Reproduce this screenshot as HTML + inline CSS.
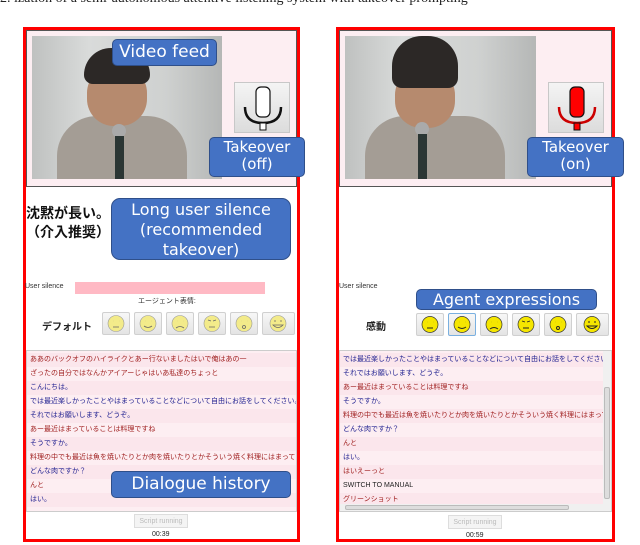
<!DOCTYPE html>
<html><head><meta charset="utf-8"><style>
*{margin:0;padding:0;box-sizing:border-box}
body{width:640px;height:545px;background:#fff;position:relative;overflow:hidden;font-family:"Liberation Sans","Noto Sans CJK JP",sans-serif}
.a{position:absolute}
.red{border:3px solid #f00}
.top{background:#fdeef2;border:1px solid #555}
.vid{background:linear-gradient(90deg,#bfc1c0 0%,#d9dbda 30%,#cfd1d0 70%,#b5b7b6 100%);overflow:hidden}
.lbl{background:#4472c4;border:1px solid #2f4f8a;border-radius:5px;color:#fff;text-align:center;font-family:"DejaVu Sans",sans-serif;line-height:1.15}
.mic{background:linear-gradient(#f4f4f4,#dcdcdc);border:1px solid #c8c8c8}
.face{background:linear-gradient(#f7f7f7,#e4e4e4);border:1px solid #d0d0d0;border-radius:2px}
.dlg{border:1px solid #ccc;background:#fdeef2;font-size:7px;overflow:hidden}
.dlg div{height:14px;line-height:14px;padding-left:3px;white-space:nowrap}
.dlg div:nth-child(odd){background:#fbe6ec}
.r{color:#a02020}.b{color:#202090}
.btn{border:1px solid #ddd;background:#f4f4f4;color:#bbb;font-size:7px;text-align:center;line-height:13px}
</style></head><body>
<div class="a" style="left:0;top:-9px;font-family:'Liberation Serif',serif;font-size:14px;color:#222;white-space:nowrap">2. ization of a semi-autonomous attentive listening system with takeover prompting</div>

<!-- LEFT -->
<div class="a red" style="left:23px;top:27px;width:277px;height:515px"></div>
<div class="a top" style="left:26px;top:30px;width:271px;height:157px"></div>
<div class="a vid" style="left:32px;top:36px;width:190px;height:143px">
 <div class="a" style="left:25px;top:80px;width:130px;height:80px;background:#a49d95;border-radius:40px 40px 0 0"></div>
 <div class="a" style="left:55px;top:30px;width:60px;height:60px;background:#b68a6e;border-radius:45%"></div>
 <div class="a" style="left:52px;top:12px;width:66px;height:36px;background:#2c2826;border-radius:30px 30px 10px 10px"></div>
 <div class="a" style="left:80px;top:88px;width:14px;height:14px;background:#aaa;border-radius:50%"></div>
 <div class="a" style="left:83px;top:100px;width:9px;height:45px;background:#2b3634"></div>
</div>
<div class="a lbl" style="left:112px;top:39px;width:105px;height:27px;font-size:17px;line-height:25px">Video feed</div>
<div class="a mic" style="left:234px;top:82px;width:56px;height:51px">
<svg width="56" height="51" viewBox="0 0 56 51"><rect x="21" y="4" width="14" height="30" rx="5" fill="#fff" stroke="#111" stroke-width="1.2"/><path d="M10 24 Q10 40 28 40 Q46 40 46 24" fill="none" stroke="#111" stroke-width="2.5"/><rect x="25" y="40" width="6" height="7" fill="#fff" stroke="#111"/></svg></div>
<div class="a lbl" style="left:209px;top:137px;width:96px;height:40px;font-size:15px;padding-top:1px">Takeover<br>(off)</div>
<div class="a" style="left:26px;top:204px;font-size:14px;font-weight:bold;line-height:19px;color:#111">沈黙が長い。<br>（介入推奨）</div>
<div class="a lbl" style="left:111px;top:198px;width:180px;height:62px;font-size:16px;line-height:20px;padding-top:1px;border-radius:9px">Long user silence<br>(recommended<br>takeover)</div>
<div class="a" style="left:25px;top:283px;font-size:7px;color:#333">User silence</div>
<div class="a" style="left:75px;top:282px;width:190px;height:12px;background:#ffb9c4"></div>
<div class="a" style="left:138px;top:296px;font-size:7px;color:#333">エージェント表情:</div>
<div class="a" style="left:42px;top:318px;font-size:10px;font-weight:bold;color:#222">デフォルト</div>

<!-- RIGHT -->
<div class="a red" style="left:336px;top:27px;width:279px;height:515px"></div>
<div class="a top" style="left:339px;top:30px;width:273px;height:157px"></div>
<div class="a vid" style="left:345px;top:36px;width:191px;height:143px">
 <div class="a" style="left:20px;top:80px;width:140px;height:80px;background:#a49d95;border-radius:40px 40px 0 0"></div>
 <div class="a" style="left:50px;top:32px;width:60px;height:60px;background:#b68a6e;border-radius:45%"></div>
 <div class="a" style="left:47px;top:0px;width:66px;height:52px;background:#2c2826;border-radius:30px 30px 10px 10px"></div>
 <div class="a" style="left:70px;top:86px;width:14px;height:14px;background:#aaa;border-radius:50%"></div>
 <div class="a" style="left:73px;top:98px;width:9px;height:45px;background:#2b3634"></div>
</div>
<div class="a mic" style="left:548px;top:82px;width:56px;height:51px">
<svg width="56" height="51" viewBox="0 0 56 51"><rect x="21" y="4" width="14" height="30" rx="5" fill="#f00" stroke="#111" stroke-width="1.2"/><path d="M10 24 Q10 40 28 40 Q46 40 46 24" fill="none" stroke="#c00" stroke-width="2.5"/><rect x="25" y="40" width="6" height="7" fill="#f00" stroke="#111"/></svg></div>
<div class="a lbl" style="left:527px;top:137px;width:97px;height:40px;font-size:15px;padding-top:1px">Takeover<br>(on)</div>
<div class="a" style="left:339px;top:283px;font-size:7px;color:#333">User silence</div>
<div class="a lbl" style="left:416px;top:289px;width:181px;height:21px;font-size:16px;line-height:19px">Agent expressions</div>
<div class="a" style="left:366px;top:318px;font-size:10px;font-weight:bold;color:#222">感動</div>

<div class="a face" style="left:102px;top:312px;width:28px;height:23px"></div>
<div class="a face" style="left:134px;top:312px;width:28px;height:23px"></div>
<div class="a face" style="left:166px;top:312px;width:28px;height:23px"></div>
<div class="a face" style="left:198px;top:312px;width:28px;height:23px"></div>
<div class="a face" style="left:230px;top:312px;width:28px;height:23px"></div>
<div class="a face" style="left:262px;top:312px;width:33px;height:23px"></div>
<div class="a face" style="left:416px;top:313px;width:28px;height:23px"></div>
<div class="a face" style="left:448px;top:313px;width:28px;height:23px;border-color:#7ab0e0"></div>
<div class="a face" style="left:480px;top:313px;width:28px;height:23px"></div>
<div class="a face" style="left:512px;top:313px;width:28px;height:23px"></div>
<div class="a face" style="left:544px;top:313px;width:28px;height:23px"></div>
<div class="a face" style="left:576px;top:313px;width:33px;height:23px"></div>
<svg class="a" style="left:0;top:0" width="640" height="545">
<g fill="#f3eb8a" stroke="#999" stroke-width=".6">
<circle cx="116" cy="323.5" r="8"/><circle cx="148" cy="323.5" r="8"/><circle cx="180" cy="323.5" r="8"/><circle cx="212" cy="323.5" r="8"/><circle cx="244" cy="323.5" r="8"/><circle cx="278" cy="323.5" r="8"/>
</g>
<g fill="#f5e600" stroke="#333" stroke-width=".7">
<circle cx="430" cy="324.5" r="8"/><circle cx="462" cy="324.5" r="8"/><circle cx="494" cy="324.5" r="8"/><circle cx="526" cy="324.5" r="8"/><circle cx="558" cy="324.5" r="8"/><circle cx="592" cy="324.5" r="8"/>
</g>
<g fill="none" stroke="#666" stroke-width=".8">
<path d="M113 321h.1M119 321h.1M113 327h6"/><path d="M145 321h.1M151 321h.1M144 326q4 3 8 0"/><path d="M177 321h.1M183 321h.1M176 328q4-3 8 0"/><path d="M208 320l3 1M216 320l-3 1M209 327h6"/><path d="M241 321h.1M247 321h.1"/><circle cx="244" cy="327" r="1.5"/><path d="M274 321h2M280 321h2M273 325q5 5 10 0z"/>
</g>
<g fill="none" stroke="#222" stroke-width=".9">
<path d="M427 322h.1M433 322h.1M427 328h6"/><path d="M459 322h.1M465 322h.1M458 327q4 3 8 0"/><path d="M491 322h.1M497 322h.1M490 329q4-3 8 0"/><path d="M522 321l3 1M530 321l-3 1M523 328h6"/><path d="M555 322h.1M561 322h.1"/><circle cx="558" cy="328" r="1.5"/><path d="M588 322h2M594 322h2M587 326q5 5 10 0z"/>
</g>
</svg>

<div class="a dlg" style="left:26px;top:350px;width:271px;height:162px;padding-top:2px">
<div class="r">ああのバックオフのハイライクとあー行ないましたはいで俺はあの一</div>
<div class="r">ざったの自分ではなんかアイアーじゃはいあ私達のちょっと</div>
<div class="b">こんにちは。</div>
<div class="b">では最近楽しかったことやはまっていることなどについて自由にお話をしてください。</div>
<div class="b">それではお願いします、どうぞ。</div>
<div class="r">あー最近はまっていることは料理ですね</div>
<div class="b">そうですか。</div>
<div class="r">料理の中でも最近は魚を焼いたりとか肉を焼いたりとかそういう焼く料理にはまっています</div>
<div class="b">どんな肉ですか？</div>
<div class="r">んと</div>
<div class="b">はい。</div>
<div></div>
</div>
<div class="a lbl" style="left:111px;top:471px;width:180px;height:27px;font-size:17px;line-height:25px">Dialogue history</div>
<div class="a btn" style="left:134px;top:514px;width:54px;height:14px">Script running</div>
<div class="a" style="left:152px;top:531px;font-size:7px;color:#222">00:39</div>

<div class="a dlg" style="left:339px;top:350px;width:273px;height:162px;padding-top:2px">
<div class="b">では最近楽しかったことやはまっていることなどについて自由にお話をしてください。</div>
<div class="b">それではお願いします、どうぞ。</div>
<div class="r">あー最近はまっていることは料理ですね</div>
<div class="b">そうですか。</div>
<div class="r">料理の中でも最近は魚を焼いたりとか肉を焼いたりとかそういう焼く料理にはまっています</div>
<div class="b">どんな肉ですか？</div>
<div class="r">んと</div>
<div class="b">はい。</div>
<div class="r">はいえーっと</div>
<div style="color:#222">SWITCH TO MANUAL</div>
<div class="r">グリーンショット</div>
</div>
<div class="a" style="left:603px;top:351px;width:8px;height:160px;background:#f0f0f0"></div>
<div class="a" style="left:604px;top:387px;width:6px;height:112px;background:#ddd;border:1px solid #bbb;border-radius:2px"></div>
<div class="a" style="left:340px;top:504px;width:263px;height:7px;background:#f0f0f0"></div>
<div class="a" style="left:345px;top:505px;width:224px;height:5px;background:#ddd;border:1px solid #bbb;border-radius:2px"></div>
<div class="a btn" style="left:448px;top:515px;width:54px;height:14px">Script running</div>
<div class="a" style="left:466px;top:532px;font-size:7px;color:#222">00:59</div>
</body></html>
